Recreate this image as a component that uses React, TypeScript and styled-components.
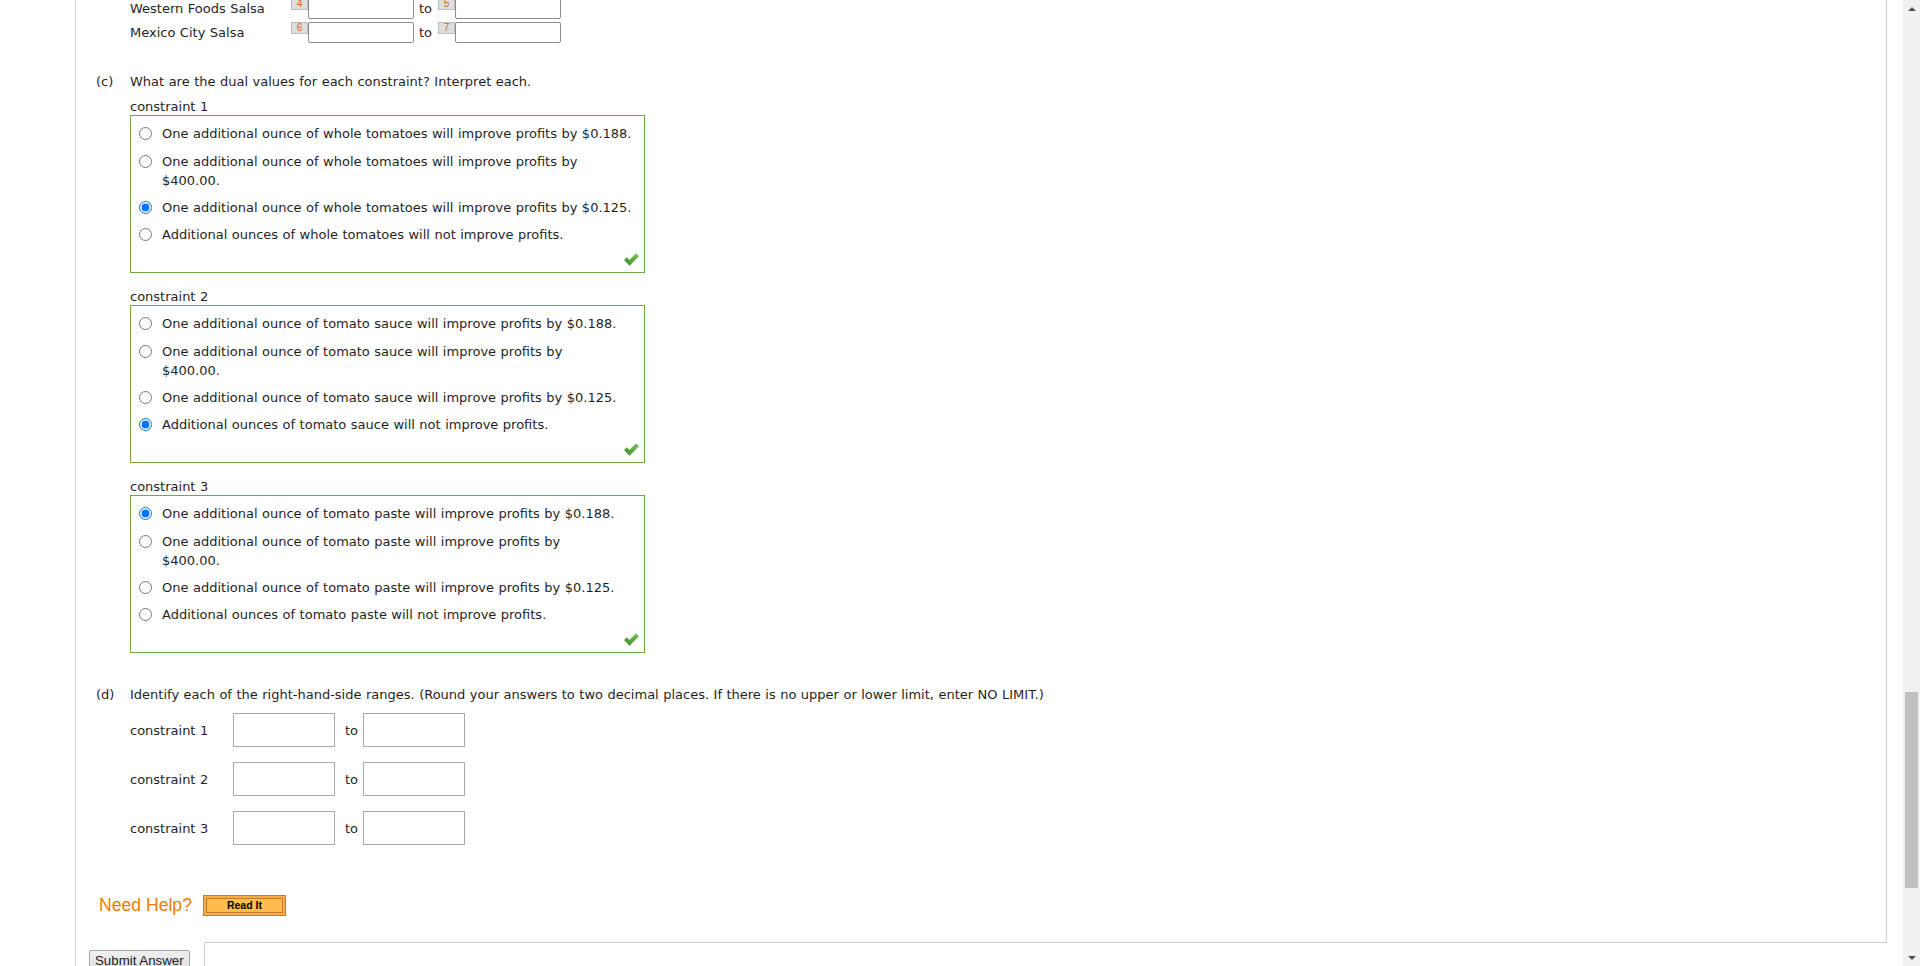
import React from "react";
import styled, { createGlobalStyle } from "styled-components";

type Choice = { text: React.ReactNode; checked?: boolean };

type ConstraintGroup = {
  label: string;
  name: string;
  choices: Choice[];
};

const makeChoices = (item: string, picked: number): Choice[] => [
  { text: `One additional ounce of ${item} will improve profits by $0.188.` },
  {
    text: (
      <>
        One additional ounce of {item} will improve profits by
        <br />
        $400.00.
      </>
    ),
  },
  { text: `One additional ounce of ${item} will improve profits by $0.125.` },
  { text: `Additional ounces of ${item} will not improve profits.` },
].map((c, i) => ({ ...c, checked: i === picked }));

const groups: ConstraintGroup[] = [
  { label: "constraint 1", name: "c1", choices: makeChoices("whole tomatoes", 2) },
  { label: "constraint 2", name: "c2", choices: makeChoices("tomato sauce", 3) },
  { label: "constraint 3", name: "c3", choices: makeChoices("tomato paste", 0) },
];

const salsaRows = [
  { label: "Western Foods Salsa", from: 4, to: 5 },
  { label: "Mexico City Salsa", from: 6, to: 7 },
];

const CheckMark = () => (
  <svg width="15" height="13" viewBox="0 0 15 13">
    <defs>
      <linearGradient id="okGrad" x1="0" y1="1" x2="1" y2="0">
        <stop offset="0" stopColor="#3a8a24" />
        <stop offset="1" stopColor="#7fc65c" />
      </linearGradient>
    </defs>
    <path d="M0 7.1 L2.9 4.3 L5.5 6.9 L12 0.3 L15 3.3 L5.5 12.8 Z" fill="url(#okGrad)" />
  </svg>
);

const App = () => {
  return (
    <>
      <GlobalStyle />
      <Viewport>
        <PageColumn>
          <Sheet>
            <QuestionArea>
              <RangeRows>
                {salsaRows.map((row) => (
                  <RangeRow key={row.label}>
                    <RowLabel>{row.label}</RowLabel>
                    <Badge>{row.from}</Badge>
                    <SmallInput type="text" />
                    <ToText>to</ToText>
                    <Badge>{row.to}</Badge>
                    <SmallInput type="text" />
                  </RangeRow>
                ))}
              </RangeRows>

              <Part $top={30}>
                <PartTag>(c)</PartTag>
                <PartBody>
                  <Prompt>What are the dual values for each constraint? Interpret each.</Prompt>
                  {groups.map((g, gi) => (
                    <React.Fragment key={g.name}>
                      <ConstraintLabel $first={gi === 0}>{g.label}</ConstraintLabel>
                      <ChoiceBox>
                        <ChoiceList>
                          {g.choices.map((c, i) => (
                            <ChoiceRow key={i}>
                              <Radio type="radio" name={g.name} defaultChecked={c.checked} />
                              <ChoiceText>{c.text}</ChoiceText>
                            </ChoiceRow>
                          ))}
                        </ChoiceList>
                        <CheckRow>
                          <CheckMark />
                        </CheckRow>
                      </ChoiceBox>
                    </React.Fragment>
                  ))}
                </PartBody>
              </Part>

              <Part $top={33}>
                <PartTag>(d)</PartTag>
                <PartBody>
                  <Prompt>
                    Identify each of the right-hand-side ranges. (Round your answers to two decimal
                    places. If there is no upper or lower limit, enter NO LIMIT.)
                  </Prompt>
                  <RhsRows>
                    {groups.map((g) => (
                      <RhsRow key={g.name}>
                        <RhsLabel>{g.label}</RhsLabel>
                        <BigInput type="text" />
                        <RhsTo>to</RhsTo>
                        <BigInput type="text" />
                      </RhsRow>
                    ))}
                  </RhsRows>
                </PartBody>
              </Part>

              <HelpRow>
                <HelpText>Need Help?</HelpText>
                <ReadItButton type="button">
                  <ReadItInner>Read It</ReadItInner>
                </ReadItButton>
              </HelpRow>
            </QuestionArea>

            <FooterRow>
              <SubmitButton type="button">Submit Answer</SubmitButton>
              <FooterBox />
            </FooterRow>
          </Sheet>
        </PageColumn>

        <ScrollTrack>
          <ScrollArrow $down={false} />
          <ThumbLane>
            <Thumb />
          </ThumbLane>
          <ScrollArrow $down />
        </ScrollTrack>
      </Viewport>
    </>
  );
};

const GlobalStyle = createGlobalStyle`
  html, body {
    margin: 0;
    padding: 0;
    background: #fff;
  }
  body {
    font-family: "DejaVu Sans", Verdana, sans-serif;
    font-size: 13px;
    word-spacing: 0.35px;
    color: #1f1f1f;
  }
`;

const Viewport = styled.div`
  display: flex;
  height: 966px;
  overflow: hidden;
`;

const PageColumn = styled.div`
  flex: 1;
  min-width: 0;
  display: flex;
  padding: 0 16px 0 75px;
`;

const Sheet = styled.div`
  flex: 1;
  display: flex;
  flex-direction: column;
  border-left: 1px solid #d0d0d0;
`;

const QuestionArea = styled.div`
  border-right: 1px solid #c9c9c9;
  border-bottom-right-radius: 4px;
  padding: 0 0 26px 20px;
`;

const RangeRows = styled.div`
  margin: -2px 0 0 34px;
  display: flex;
  flex-direction: column;
  gap: 3px;
`;

const RangeRow = styled.div`
  display: flex;
  align-items: flex-start;
  height: 21px;
`;

const RowLabel = styled.span`
  width: 161px;
  line-height: 21px;
`;

const Badge = styled.span`
  box-sizing: border-box;
  width: 17px;
  height: 12px;
  border: 1px solid #bdbdbd;
  background: #dedede;
  color: #d9661a;
  font-family: "Liberation Sans", Arial, sans-serif;
  font-size: 10px;
  line-height: 10px;
  text-align: center;
`;

const SmallInput = styled.input`
  box-sizing: border-box;
  width: 106px;
  height: 21px;
  margin: 0;
  border: 1px solid #8c8c8c;
  border-radius: 2px;
  background: #fff;
`;

const ToText = styled.span`
  line-height: 21px;
  margin: 0 6px 0 5px;
`;

const Part = styled.div<{ $top: number }>`
  display: flex;
  margin-top: ${(p) => p.$top}px;
`;

const PartTag = styled.span`
  width: 34px;
  flex-shrink: 0;
  line-height: 18px;
`;

const PartBody = styled.div`
  display: flex;
  flex-direction: column;
`;

const Prompt = styled.div`
  line-height: 18px;
`;

const ConstraintLabel = styled.div<{ $first: boolean }>`
  line-height: 17px;
  margin-top: ${(p) => (p.$first ? 7 : 15)}px;
`;

const ChoiceBox = styled.div`
  box-sizing: border-box;
  width: 515px;
  border: 1px solid #6ea847;
  padding: 8px 5px 5px 0;
`;

const ChoiceList = styled.div`
  display: flex;
  flex-direction: column;
  gap: 8px;
`;

const ChoiceRow = styled.label`
  display: flex;
  align-items: flex-start;
  line-height: 19px;
  &:first-child {
    margin-bottom: 1px;
  }
`;

const Radio = styled.input`
  width: 13px;
  height: 13px;
  margin: 3px 10px 0 8px;
  flex-shrink: 0;
`;

const ChoiceText = styled.span`
  white-space: nowrap;
`;

const CheckRow = styled.div`
  display: flex;
  justify-content: flex-end;
  height: 14px;
  margin-top: 9px;
`;

const RhsRows = styled.div`
  display: flex;
  flex-direction: column;
  gap: 15px;
  margin-top: 9px;
`;

const RhsRow = styled.div`
  display: flex;
  align-items: center;
  height: 34px;
`;

const RhsLabel = styled.span`
  width: 103px;
`;

const BigInput = styled.input`
  box-sizing: border-box;
  width: 102px;
  height: 34px;
  margin: 0;
  border: 1px solid #a9a9a9;
  background: #fff;
`;

const RhsTo = styled.span`
  margin: 0 5px 0 10px;
`;

const HelpRow = styled.div`
  display: flex;
  align-items: center;
  height: 22px;
  margin: 49px 0 0 3px;
`;

const HelpText = styled.span`
  font-family: "Liberation Sans", Arial, sans-serif;
  font-size: 17.6px;
  word-spacing: 0;
  color: #ef7d00;
`;

const ReadItButton = styled.button`
  box-sizing: border-box;
  width: 83px;
  height: 21px;
  margin-left: 11px;
  padding: 2px;
  border: 1px solid #c97a2a;
  background: #fbae3c;
  display: flex;
  cursor: pointer;
`;

const ReadItInner = styled.span`
  flex: 1;
  border: 1px solid #c27a30;
  background: #ffbd4d;
  font-family: "Liberation Sans", Arial, sans-serif;
  font-size: 10.5px;
  font-weight: bold;
  color: #000;
  line-height: 13px;
  text-align: center;
`;

const FooterRow = styled.div`
  display: flex;
  align-items: flex-start;
`;

const SubmitButton = styled.button`
  box-sizing: border-box;
  height: 21px;
  margin: 8px 0 0 13px;
  padding: 0 5px;
  border: 1px solid #a5a5a5;
  border-radius: 2px;
  background: linear-gradient(#f0f0f0, #e0e0e0);
  font-family: "Liberation Sans", Arial, sans-serif;
  font-size: 13.3px;
  word-spacing: 0;
  color: #222;
`;

const FooterBox = styled.div`
  flex: 1;
  height: 60px;
  margin-left: 14px;
  border-top: 1px solid #cdcdcd;
  border-left: 1px solid #cdcdcd;
`;

const ScrollTrack = styled.div`
  width: 17px;
  display: flex;
  flex-direction: column;
  background: #f1f1f1;
`;

const ScrollArrow = styled.div<{ $down: boolean }>`
  height: 17px;
  display: flex;
  align-items: center;
  justify-content: center;
  &::before {
    content: "";
    border-left: 4px solid transparent;
    border-right: 4px solid transparent;
    ${(p) => (p.$down ? "border-top: 4px solid #505050;" : "border-bottom: 4px solid #505050;")}
  }
`;

const ThumbLane = styled.div`
  flex: 1;
  position: relative;
`;

const Thumb = styled.div`
  position: absolute;
  left: 2px;
  right: 2px;
  top: 675px;
  height: 196px;
  background: #c1c1c1;
`;

export default App;
